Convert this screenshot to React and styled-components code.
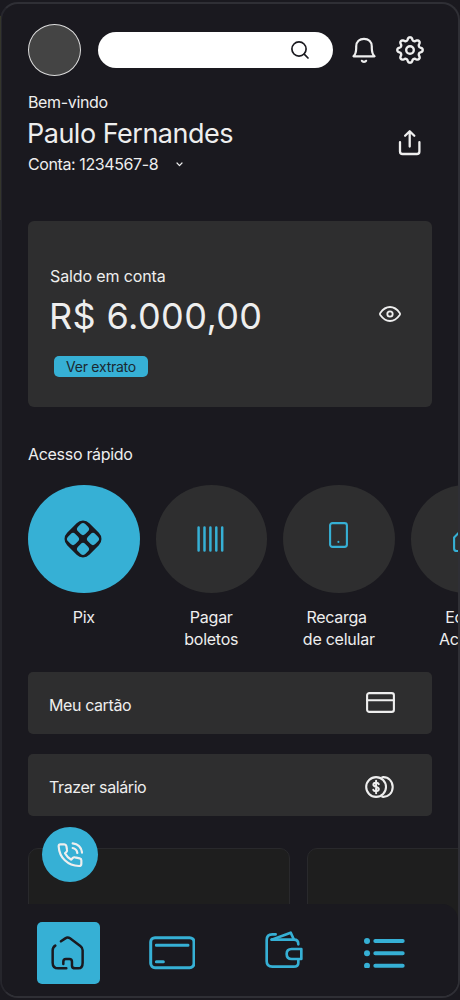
import React from 'react'
import styled, { createGlobalStyle } from 'styled-components'

const BLUE = '#36b0d5'
const DARK = '#1a191f'
const LIGHT = '#eeeeee'

// eight-toothed outline for the settings icon
const gearPath = () => {
    const points = []
    for (let i = 0; i < 160; i++) {
        const a = (i / 160) * Math.PI * 2
        const r = 11.2 + 1.5 * Math.tanh(1.2 * Math.cos(8 * a)) / Math.tanh(1.2)
        points.push(`${(14 + r * Math.cos(a)).toFixed(2)} ${(14 + r * Math.sin(a)).toFixed(2)}`)
    }
    return `M${points.join('L')}Z`
}

const SearchIcon = () => (
    <Icon width="18" height="18" viewBox="0 0 18 18" $color="#1b1a20" $stroke={1.7}>
        <circle cx="8" cy="8" r="7.1" />
        <path d="M13.2 13.2L17 17" />
    </Icon>
)

const BellIcon = () => (
    <Icon width="24" height="27" viewBox="0 0 24 27" $stroke={2.2}>
        <path d="M1.5 19.3C3.4 17.5 4.2 14.5 4.2 11V9.5C4.2 4.6 7.6 1.8 12 1.8C16.4 1.8 19.8 4.6 19.8 9.5V11C19.8 14.5 20.6 17.5 22.5 19.3Z" />
        <path d="M9.9 23.8C10.5 25.2 13.5 25.2 14.1 23.8" />
    </Icon>
)

const GearIcon = () => (
    <Icon width="28" height="28" viewBox="0 0 28 28" $stroke={2.4}>
        <path d={gearPath()} />
        <circle cx="14" cy="14" r="3.8" />
    </Icon>
)

const ShareIcon = () => (
    <Icon width="24" height="28" viewBox="0 0 24 28" $stroke={2.3}>
        <path d="M2 13.2V22.4Q2 25 4.6 25H18.8Q21.4 25 21.4 22.4V13.2" />
        <path d="M11.7 17.5V2.4M7.1 6.8L11.7 2.2L16.3 6.8" />
    </Icon>
)

const EyeIcon = () => (
    <Icon width="22" height="16" viewBox="0 0 22 16" $stroke={1.8}>
        <path d="M1.3 6.9C3.9 3.2 7.2 1 11 1S18.1 3.2 20.7 6.9Q21.4 8 20.7 9.1C18.1 12.8 14.8 15 11 15S3.9 12.8 1.3 9.1Q.6 8 1.3 6.9Z" />
        <circle cx="11" cy="8" r="2.7" />
    </Icon>
)

const PixIcon = () => (
    <svg width="38" height="38" viewBox="-19 -19 38 38">
        <g transform="rotate(45)">
            <rect x="-15.7" y="-15.7" width="31.4" height="31.4" rx="9" fill={DARK} />
            <rect x="-12.2" y="-12.2" width="10.3" height="10.3" rx="3.2" fill={BLUE} />
            <rect x="1.9" y="-12.2" width="10.3" height="10.3" rx="3.2" fill={BLUE} />
            <rect x="-12.2" y="1.9" width="10.3" height="10.3" rx="3.2" fill={BLUE} />
            <rect x="1.9" y="1.9" width="10.3" height="10.3" rx="3.2" fill={BLUE} />
        </g>
    </svg>
)

const BarcodeIcon = () => (
    <Icon width="28" height="26" viewBox="0 0 28 26" $color={BLUE} $stroke={2.5}>
        <path d="M1.6 1.6V24.4M7.5 1.6V24.4M13.4 1.6V24.4M19.3 1.6V24.4M25.2 1.6V24.4" />
    </Icon>
)

const TabletIcon = () => (
    <Icon width="19" height="26" viewBox="0 0 19 26" $color={BLUE} $stroke={2.1}>
        <rect x="1.1" y="1.1" width="16.8" height="23.8" rx="2.4" />
        <path d="M9.4 19.9V20" />
    </Icon>
)

const EditIcon = () => (
    <Icon width="26" height="20" viewBox="0 0 26 20" $color={BLUE} $stroke={2.1}>
        <path d="M10 1H5.5L1.1 5.5V16.5Q1.1 19 3.6 19H22" />
    </Icon>
)

const CardIcon = () => (
    <Icon width="29" height="21" viewBox="0 0 29 21" $stroke={2.1}>
        <rect x="1.1" y="1.1" width="26.8" height="18.8" rx="2.2" />
        <path d="M1 8.2H28" />
    </Icon>
)

const CoinsIcon = () => (
    <Icon width="29" height="22" viewBox="0 0 29 22" $stroke={2.1}>
        <circle cx="11.1" cy="11" r="9.9" />
        <path d="M17.2 1.2C23.8.6 27.7 5.7 27.7 11S23.8 21.4 17.2 20.8" />
        <path d="M13.8 8.1C13 6.2 8.4 6.1 8.4 8.8C8.4 11.6 13.8 10.3 13.8 13.1C13.8 15.8 9 15.7 8.3 13.8M11.1 4.8V17.2" strokeWidth="2" />
    </Icon>
)

const CallIcon = () => (
    <Icon width="26.7" height="26.7" viewBox="48 50 80 80" $stroke={6.5}>
        <path d="M58 60H70Q75 60 76 65L78 76Q79 80 76 83L72 87Q78 99 91 106L95 101Q98 98 102 99L116 102Q121 103 121 108V118Q121 125 114 125C80 124 55 100 53 66Q53 60 58 60Z" />
        <path d="M95 57Q120 60 123 85M95 71Q107 73 109 86" />
    </Icon>
)

const HomeIcon = () => (
    <Icon width="33.3" height="34" viewBox="0 0 100 102" $color={DARK} $stroke={7.5}>
        <path d="M30 16L43 7Q50 2 57 7L88 30Q95 35 95 43V80Q95 97 82 97H73Q63 97 63 89V77Q63 69 55 69H45Q37 69 37 77V84" />
        <path d="M46 97H22Q5 97 5 80V43Q5 34 13 29" />
    </Icon>
)

const CreditIcon = () => (
    <Icon width="46.7" height="33.3" viewBox="0 0 140 100" $color={BLUE} $stroke={9}>
        <rect x="5" y="5" width="130" height="90" rx="13" />
        <path d="M22 28H117M22 77H43" />
    </Icon>
)

const WalletIcon = () => (
    <Icon width="38" height="37.3" viewBox="0 0 114 112" $color={BLUE} $stroke={8}>
        <path d="M32 10H22Q5 10 5 27V91Q5 107 22 107H86Q100 107 100 96V86" />
        <path d="M20 26H87Q100 26 100 40" />
        <path d="M20 26L77 5L86 24" />
        <path d="M109 54H80Q65 54 65 69T80 84H109Z" />
    </Icon>
)

const ListIcon = () => (
    <svg width="40.7" height="30.7" viewBox="0 0 122 92">
        <g fill={BLUE}>
            <circle cx="9" cy="9" r="9" />
            <circle cx="9" cy="46" r="9" />
            <circle cx="9" cy="83" r="9" />
        </g>
        <path d="M34 9H116M34 46H116M34 83H116" stroke={BLUE} strokeWidth="12" strokeLinecap="round" />
    </svg>
)

const quickItems = [
    { lines: ['Pix'], icon: <PixIcon />, active: true },
    { lines: ['Pagar', 'boletos'], icon: <BarcodeIcon /> },
    { lines: ['Recarga ', 'de celular'], icon: <TabletIcon />, lift: 8 },
    { lines: ['Editar', 'Acesso'], icon: <EditIcon />, lift: -6 },
]

const App = () => {
    return (
        <>
            <GlobalStyle />
            <Page>
                <Phone>
                    <Header>
                        <Avatar />
                        <SearchBar><SearchIcon /></SearchBar>
                        <BellIcon />
                        <GearIcon />
                    </Header>
                    <Welcome>
                        <div>
                            <Greeting>Bem-vindo</Greeting>
                            <UserName>Paulo Fernandes</UserName>
                            <Account>
                                Conta: 1234567-8
                                <Icon width="7" height="5" viewBox="0 0 7 5" $stroke={1.2}>
                                    <path d="M1 1L3.5 3.6L6 1" />
                                </Icon>
                            </Account>
                        </div>
                        <ShareIcon />
                    </Welcome>
                    <BalanceCard>
                        <div>
                            <BalanceLabel>Saldo em conta</BalanceLabel>
                            <BalanceValue>R$ 6.000,00</BalanceValue>
                            <StatementButton>Ver extrato</StatementButton>
                        </div>
                        <EyeIcon />
                    </BalanceCard>
                    <SectionTitle>Acesso rápido</SectionTitle>
                    <QuickRow>
                        {quickItems.map((item) => (
                            <QuickItem key={item.lines[0]}>
                                <QuickCircle $active={item.active} $lift={item.lift}>{item.icon}</QuickCircle>
                                <QuickLabel>
                                    {item.lines.map((line) => <span key={line}>{line}</span>)}
                                </QuickLabel>
                            </QuickItem>
                        ))}
                    </QuickRow>
                    <Options>
                        <Option $iconRight={37}>
                            <OptionText>Meu cartão</OptionText>
                            <CardIcon />
                        </Option>
                        <Option $iconRight={38} $iconDrop={4}>
                            <OptionText>Trazer salário</OptionText>
                            <CoinsIcon />
                        </Option>
                    </Options>
                    <Promos>
                        <Promo />
                        <Promo />
                    </Promos>
                    <CallButton>
                        <CallIcon />
                    </CallButton>
                    <NavBar>
                        <NavItem $active><HomeIcon /></NavItem>
                        <NavItem $gap={49}><CreditIcon /></NavItem>
                        <NavItem $gap={70} $lift={7}><WalletIcon /></NavItem>
                        <NavItem $gap={61}><ListIcon /></NavItem>
                    </NavBar>
                </Phone>
            </Page>
        </>
    )
}
export default App

const GlobalStyle = createGlobalStyle`
    *{
        box-sizing: border-box;
    }
    body{
        margin: 0;
        background: ${DARK};
        font-family: Inter, 'Liberation Sans', sans-serif;
        color: ${LIGHT};
    }
    svg{
        display: block;
        flex-shrink: 0;
    }
`
const Icon = styled.svg`
    fill: none;
    stroke: ${({ $color }) => $color || LIGHT};
    stroke-width: ${({ $stroke }) => $stroke};
    stroke-linecap: round;
    stroke-linejoin: round;
`
const Page = styled.div`
    width: 460px;
    height: 1000px;
    padding-top: 2px;
    overflow: hidden;
    background: linear-gradient(#3d3f20, #3d3f20) 0 16px / 1px 204px no-repeat ${DARK};
`
const Phone = styled.div`
    position: relative;
    display: flex;
    flex-direction: column;
    height: 996px;
    border: 2px solid #2f2f35;
    border-left-color: #2f2f3599;
    border-radius: 18px;
    overflow: hidden;
`
const Header = styled.div`
    display: flex;
    align-items: center;
    height: 52px;
    margin-top: 20px;
    padding-left: 26px;
    > svg:nth-of-type(1){
        margin-left: 19px;
    }
    > svg:nth-of-type(2){
        margin-left: 19.5px;
    }
`
const Avatar = styled.div`
    width: 53px;
    height: 52px;
    border: 1px solid #dcdcdc;
    border-radius: 50%;
    background: #444444;
`
const SearchBar = styled.div`
    display: flex;
    align-items: center;
    justify-content: flex-end;
    width: 235px;
    height: 36px;
    margin-left: 17px;
    padding-right: 24px;
    border-radius: 18px;
    background: #fff;
`
const Welcome = styled.div`
    display: flex;
    justify-content: space-between;
    height: 82px;
    margin-top: 16px;
    padding: 0 36px 0 26px;
    > svg{
        margin-top: 37px;
    }
`
const Greeting = styled.div`
    font-size: 16px;
    line-height: 20px;
    letter-spacing: -0.35px;
`
const UserName = styled.div`
    margin-top: 6px;
    margin-left: -1px;
    font-size: 27px;
    line-height: 32px;
    letter-spacing: -0.5px;
`
const Account = styled.div`
    display: flex;
    align-items: center;
    gap: 18px;
    margin-top: 4px;
    font-size: 16px;
    line-height: 20px;
    letter-spacing: -0.4px;
`
const BalanceCard = styled.div`
    display: flex;
    align-items: center;
    justify-content: space-between;
    width: 404px;
    height: 186px;
    margin: 47px 0 0 26px;
    padding: 14px 31px 0 22px;
    border-radius: 6px;
    background: #2e2e2f;
    > svg{
        margin-top: -14px;
    }
`
const BalanceLabel = styled.div`
    font-size: 16px;
    line-height: 20px;
    letter-spacing: -0.13px;
`
const BalanceValue = styled.div`
    margin-top: 8px;
    margin-left: -1px;
    font-size: 36px;
    line-height: 44px;
    letter-spacing: 0.4px;
`
const StatementButton = styled.div`
    width: 94px;
    height: 21px;
    margin: 18px 0 0 4px;
    border-radius: 5px;
    background: ${BLUE};
    color: #1b2830;
    font-size: 14px;
    line-height: 21px;
    letter-spacing: -0.25px;
    text-align: center;
`
const SectionTitle = styled.div`
    margin: 37px 0 0 26px;
    font-size: 16px;
    line-height: 20px;
    letter-spacing: -0.3px;
`
const QuickRow = styled.div`
    display: flex;
    gap: 16px;
    height: 165px;
    margin: 21px 0 0 26px;
`
const QuickItem = styled.div`
    flex: none;
    width: 111.5px;
`
const QuickCircle = styled.div`
    display: flex;
    align-items: center;
    justify-content: center;
    height: 108px;
    padding-bottom: ${({ $lift }) => ($lift > 0 ? $lift : 0)}px;
    padding-top: ${({ $lift }) => ($lift < 0 ? -$lift : 0)}px;
    padding-right: 1px;
    border-radius: 50%;
    background: ${({ $active }) => ($active ? BLUE : '#2e2e2f')};
`
const QuickLabel = styled.div`
    display: flex;
    flex-direction: column;
    align-items: center;
    margin-top: 14px;
    font-size: 16px;
    line-height: 21.5px;
    letter-spacing: -0.25px;
    white-space: pre;
`
const Options = styled.div`
    display: flex;
    flex-direction: column;
    gap: 20.5px;
    margin: 22px 0 0 26px;
`
const Option = styled.div`
    display: flex;
    align-items: center;
    justify-content: space-between;
    width: 404px;
    height: 61.5px;
    padding: 0 ${({ $iconRight }) => $iconRight}px 0 21px;
    border-radius: 5px;
    background: #2e2e2f;
    > svg{
        margin-top: ${({ $iconDrop }) => $iconDrop || 0}px;
    }
`
const OptionText = styled.span`
    padding-top: 5px;
    font-size: 16px;
    line-height: 20px;
    letter-spacing: -0.4px;
`
const Promos = styled.div`
    display: flex;
    flex: none;
    gap: 17px;
    height: 80px;
    margin: 32.5px 0 0 26px;
`
const Promo = styled.div`
    flex: none;
    width: 262px;
    border: 1px solid #29292c;
    border-radius: 10px;
    background: #1e1e1e;
`
const CallButton = styled.div`
    position: absolute;
    left: 40px;
    top: 823px;
    display: flex;
    align-items: center;
    justify-content: center;
    width: 56px;
    height: 55px;
    border-radius: 50%;
    background: ${BLUE};
`
const NavBar = styled.div`
    display: flex;
    flex: 1;
    align-items: flex-start;
    margin-top: -24px;
    padding: 18px 0 0 34.5px;
    border-top-right-radius: 16px;
    background: ${DARK};
`
const NavItem = styled.div`
    display: flex;
    align-items: center;
    justify-content: center;
    width: ${({ $active }) => ($active ? '63px' : 'auto')};
    height: 62px;
    margin-left: ${({ $gap }) => $gap || 0}px;
    padding-bottom: ${({ $lift }) => $lift || 0}px;
    border-radius: 5px;
    background: ${({ $active }) => ($active ? BLUE : 'transparent')};
`
